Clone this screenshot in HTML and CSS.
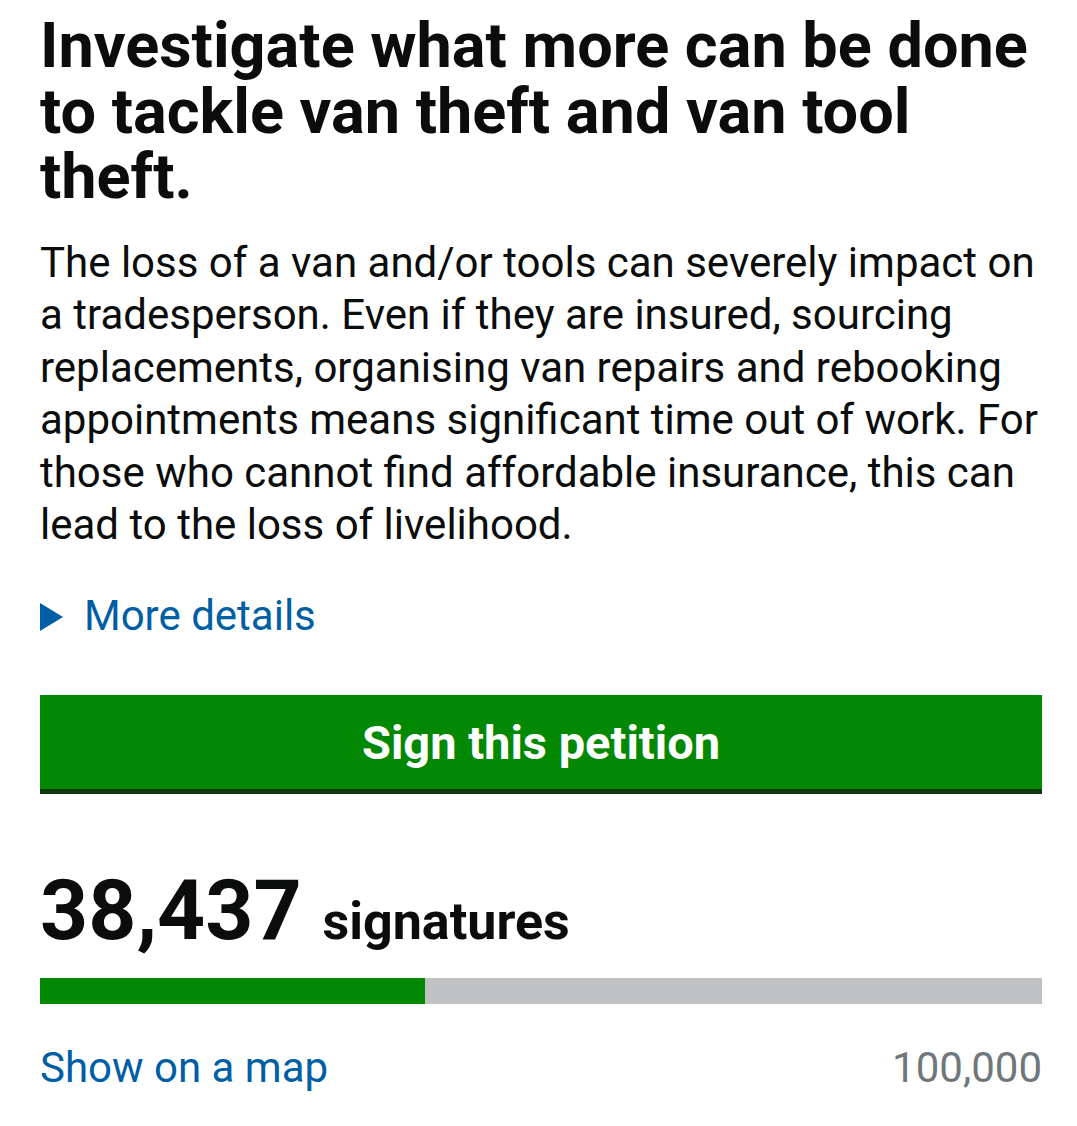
FILE: index.html
```html
<!DOCTYPE html>
<html lang="en">
<head>
<meta charset="utf-8">
<title>Investigate what more can be done to tackle van theft and van tool theft.</title>
<link rel="stylesheet" href="styles.css">
</head>
<body>
<main class="petition">
  <h1 class="title">Investigate what more can be done to tackle van theft and van tool theft.</h1>
  <p class="summary">The loss of a van and/or tools can severely impact on a tradesperson. Even if they are insured, sourcing replacements, organising van repairs and rebooking appointments means significant time out of work. For those who cannot find affordable insurance, this can lead to the loss of livelihood.</p>
  <div class="more">
    <span class="arrow"></span>
    <a class="link" href="#">More details</a>
  </div>
  <a class="button" href="#">Sign this petition</a>
  <div class="count"><span class="count-number">38,437</span> <span class="count-label">signatures</span></div>
  <div class="progress"><div class="progress-fill" style="width: 38.437%"></div></div>
  <div class="progress-meta">
    <a class="link" href="#">Show on a map</a>
    <span class="target">100,000</span>
  </div>
</main>
</body>
</html>
```

FILE: styles.css
```css
html, body {
  margin: 0;
  padding: 0;
  background: #ffffff;
}

body {
  font-family: Roboto, "Noto Sans", "Liberation Sans", sans-serif;
  color: #0b0c0c;
}

.petition {
  padding: 13px 35px 0 40px;
}

.title {
  margin: 0;
  font-size: 63px;
  line-height: 65.6px;
  font-weight: 700;
}

.summary {
  margin: 27px 0 0;
  font-size: 42px;
  line-height: 52.5px;
  font-weight: 400;
}

.more {
  margin-top: 38px;
  display: flex;
  align-items: center;
  font-size: 42px;
  line-height: 52.5px;
}

.arrow {
  width: 0;
  height: 0;
  border-top: 14px solid transparent;
  border-bottom: 14px solid transparent;
  border-left: 23px solid #005ea5;
  margin-right: 21px;
  margin-top: 1px;
}

.link {
  color: #005ea5;
  text-decoration: none;
}

.button {
  display: flex;
  align-items: center;
  justify-content: center;
  margin-top: 53px;
  height: 94px;
  background: #028802;
  box-shadow: 0 5px 0 #0d3a0d;
  color: #ffffff;
  font-size: 47px;
  font-weight: 700;
  text-decoration: none;
}

.count {
  margin-top: 80px;
  font-size: 84px;
  line-height: 84px;
  font-weight: 700;
}

.count-label {
  font-size: 52px;
  line-height: 1;
}

.progress {
  margin-top: 25px;
  height: 26px;
  background: #bfc1c3;
}

.progress-fill {
  height: 100%;
  background: #028802;
}

.progress-meta {
  margin-top: 38px;
  display: flex;
  justify-content: space-between;
  font-size: 42px;
  line-height: 52.5px;
}

.target {
  color: #6f777b;
}
```
